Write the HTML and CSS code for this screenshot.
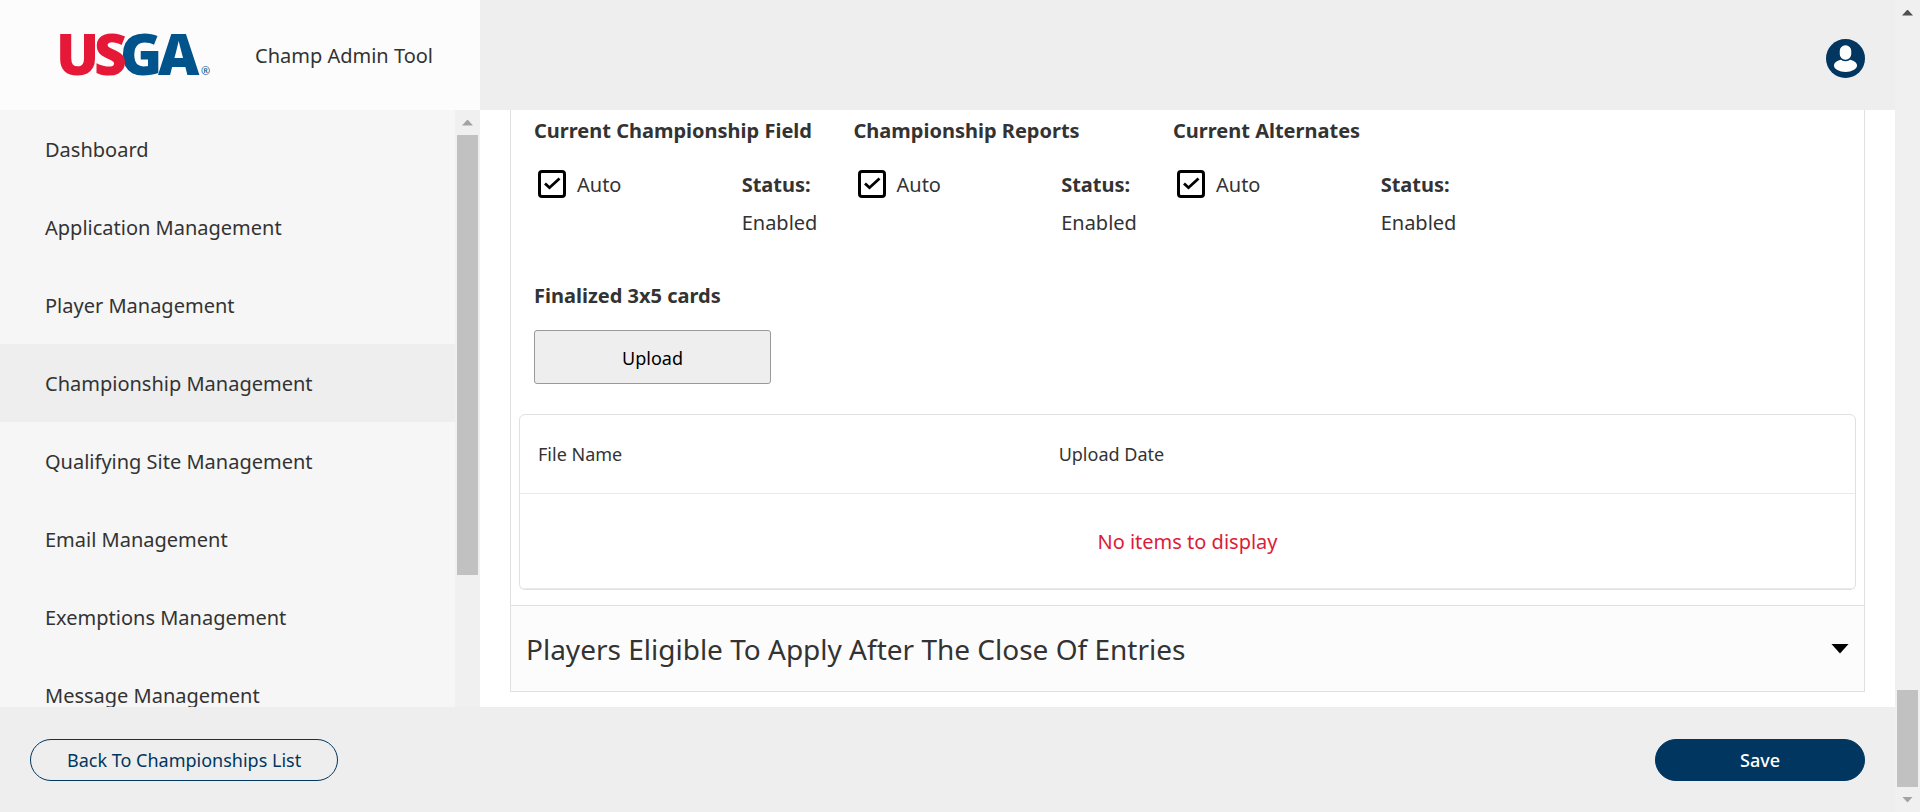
FILE: index.html
```html
<!DOCTYPE html>
<html lang="en">
<head>
<meta charset="utf-8">
<meta name="viewport" content="width=device-width, initial-scale=1">
<title>Champ Admin Tool</title>
<link rel="stylesheet" href="styles.css">
</head>
<body>
<div class="page">
  <div class="app">
    <header class="header">
      <div class="brand">
        <svg class="logo" viewBox="-6 -22 164 88" role="img" aria-label="USGA">
          <g class="logo-letters">
            <text class="logo-blue" x="60" y="42">G</text>
            <text class="logo-blue" x="98" y="42">A</text>
            <text class="logo-red" x="-4" y="42">U</text>
            <text class="logo-red" x="34" y="42">S</text>
          </g>
          <text class="logo-mark" x="141" y="42">®</text>
        </svg>
        <span class="brand-name">Champ Admin Tool</span>
      </div>
      <button class="account" type="button" aria-label="Account">
        <svg viewBox="0 0 39 39" aria-hidden="true">
          <circle cx="19.500" cy="19.500" r="19.500" fill="#00365f"/>
          <ellipse cx="19.500" cy="26.500" rx="11.500" ry="6.500" fill="#fff"/>
          <rect x="13" y="5.500" width="13" height="16" rx="6.300" fill="#fff" stroke="#00365f" stroke-width="1.500"/>
        </svg>
      </button>
    </header>

    <div class="middle">
      <aside class="sidebar">
        <nav class="nav">
          <a class="nav-link" href="#">Dashboard</a>
          <a class="nav-link" href="#">Application Management</a>
          <a class="nav-link" href="#">Player Management</a>
          <a class="nav-link nav-link-active" href="#">Championship Management</a>
          <a class="nav-link" href="#">Qualifying Site Management</a>
          <a class="nav-link" href="#">Email Management</a>
          <a class="nav-link" href="#">Exemptions Management</a>
          <a class="nav-link" href="#">Message Management</a>
        </nav>
        <div class="scrollbar" aria-hidden="true">
          <span class="scroll-arrow scroll-up"></span>
          <span class="scroll-thumb scroll-thumb-nav"></span>
        </div>
      </aside>

      <main class="main">
        <section class="panel">
          <div class="reports">
            <section>
              <h3 class="label">Current Championship Field</h3>
              <div class="report-row">
                <label class="auto"><input class="check" type="checkbox" checked>Auto</label>
                <div><strong>Status:</strong><br>Enabled</div>
              </div>
            </section>
            <section>
              <h3 class="label">Championship Reports</h3>
              <div class="report-row">
                <label class="auto"><input class="check" type="checkbox" checked>Auto</label>
                <div><strong>Status:</strong><br>Enabled</div>
              </div>
            </section>
            <section>
              <h3 class="label">Current Alternates</h3>
              <div class="report-row">
                <label class="auto"><input class="check" type="checkbox" checked>Auto</label>
                <div><strong>Status:</strong><br>Enabled</div>
              </div>
            </section>
          </div>
          <section class="cards">
            <h3 class="label">Finalized 3x5 cards</h3>
            <button class="upload" type="button">Upload</button>
          </section>
          <div class="files">
            <table class="files-table">
              <thead>
                <tr><th class="col-name" scope="col">File Name</th><th scope="col">Upload Date</th></tr>
              </thead>
              <tbody>
                <tr><td class="empty" colspan="2">No items to display</td></tr>
              </tbody>
            </table>
          </div>
        </section>
        <button class="accordion" type="button" aria-expanded="false">
          <span>Players Eligible To Apply After The Close Of Entries</span>
          <span class="caret"></span>
        </button>
      </main>
    </div>

    <footer class="footer">
      <button class="pill pill-outline" type="button">Back To Championships List</button>
      <button class="pill pill-solid" type="button">Save</button>
    </footer>
  </div>
  <div class="scrollbar" aria-hidden="true">
    <span class="scroll-arrow scroll-up scroll-up-dark"></span>
    <span class="scroll-thumb scroll-thumb-page"></span>
    <span class="scroll-arrow scroll-down"></span>
  </div>
</div>
</body>
</html>
```
FILE: styles.css
```css
* {
  box-sizing: border-box;
}

body {
  margin: 0;
  color: #333;
  background: #fff;
  font: 400 20px/38px "Noto Sans", "Open Sans", sans-serif;
}

button {
  font: inherit;
  color: inherit;
  cursor: pointer;
}

.page {
  display: flex;
  height: 100vh;
  overflow: hidden;
}

.app {
  display: flex;
  flex: 1;
  flex-direction: column;
  min-width: 0;
}

.header {
  display: flex;
  flex: none;
  align-items: center;
  justify-content: space-between;
  height: 110px;
  padding-right: 30px;
  background: #eee;
}

.brand {
  display: flex;
  align-items: center;
  gap: 37px;
  width: 480px;
  height: 100%;
  padding-left: 54px;
  background: #fcfcfc;
}

.brand-name {
  padding-top: 2px;
}

.logo {
  width: 164px;
  height: 88px;
}

.logo-letters {
  font: 800 57px "Open Sans", sans-serif;
}

.logo-red {
  fill: #e51937;
}

.logo-blue {
  fill: #00538b;
}

.logo-mark {
  fill: #00538b;
  font: 400 11px "Noto Sans", sans-serif;
}

.account {
  width: 39px;
  height: 39px;
  margin-top: 7px;
  padding: 0;
  border: 0;
  background: none;
}

.account svg {
  display: block;
}

.middle {
  display: flex;
  flex: 1;
  min-height: 0;
}

.sidebar {
  display: flex;
  flex: none;
  width: 480px;
  overflow: hidden;
  background: #f6f6f6;
}

.nav {
  flex: 1;
}

.nav-link {
  display: block;
  padding: 21px 45px 19px;
  color: inherit;
  text-decoration: none;
}

.nav-link-active {
  background: #eee;
}

.scrollbar {
  display: flex;
  flex: none;
  flex-direction: column;
  align-items: center;
  width: 25px;
  background: #f0f0f0;
}

.scroll-arrow {
  display: flex;
  flex: none;
  align-items: center;
  justify-content: center;
  height: 25px;
}

.scroll-arrow::before {
  width: 11px;
  height: 6px;
  background: #a3a3a3;
  content: "";
}

.scroll-up::before {
  clip-path: polygon(50% 0, 100% 100%, 0 100%);
}

.scroll-up-dark::before {
  background: #505050;
}

.scroll-down::before {
  clip-path: polygon(0 0, 100% 0, 50% 100%);
}

.scroll-thumb {
  width: 21px;
  background: #c1c1c1;
}

.scroll-thumb-nav {
  height: 440px;
}

.scroll-thumb-page {
  height: 97px;
  margin-top: auto;
}

.main {
  flex: 1;
  min-width: 0;
  padding: 0 30px;
  overflow: hidden;
}

.panel {
  padding: 2px 8px 15px;
  border: solid #e0e0e0;
  border-width: 0 1px;
}

.reports {
  display: grid;
  grid-template-columns: repeat(4, minmax(0, 1fr));
  padding: 0 44px 0 15px;
}

.label {
  margin: 0;
  font-size: 20px;
  font-weight: 700;
  line-height: 38px;
  white-space: nowrap;
}

.report-row {
  display: grid;
  grid-template-columns: 65% 35%;
  padding-top: 16px;
}

strong {
  font-weight: 700;
}

.auto {
  display: flex;
  align-items: center;
  align-self: start;
  gap: 11px;
  padding-left: 4px;
}

.check {
  width: 28px;
  height: 28px;
  margin: 0 0 2px;
  border: 3px solid #000;
  border-radius: 4px;
  appearance: none;
  background: url("data:image/svg+xml,%3Csvg xmlns='http://www.w3.org/2000/svg' viewBox='0 0 22 22'%3E%3Cpath d='M4 10.500l4.500 4.200 10-9.200' fill='none' stroke='%23000' stroke-width='2.800'/%3E%3C/svg%3E") center / 22px no-repeat;
}

.cards {
  padding: 35px 15px 30px;
}

.upload {
  display: block;
  width: 237px;
  height: 54px;
  margin-top: 15px;
  padding: 1px 0 0;
  border: 1px solid #999;
  border-radius: 3px;
  background: #eee;
  color: #000;
  font-size: 18px;
}

.files {
  border: 1px solid #e0e0e0;
  border-radius: 6px;
}

.files-table {
  width: 100%;
  border-spacing: 0;
}

.files-table th {
  height: 79px;
  padding: 0 18px;
  border-bottom: 1px solid #ebebeb;
  font-size: 18px;
  font-weight: 400;
  text-align: left;
}

.col-name {
  width: 39%;
}

.files-table .empty {
  height: 95px;
  padding: 1px 0 0;
  border-bottom: 1px solid #ebebeb;
  color: #dc1c38;
  text-align: center;
}

.accordion {
  display: flex;
  align-items: center;
  justify-content: space-between;
  width: 100%;
  height: 87px;
  padding: 0 15px;
  border: 1px solid #e0e0e0;
  background: #fcfcfc;
  font-size: 28px;
  text-align: left;
}

.caret {
  width: 18px;
  height: 10px;
  background: #000;
  clip-path: polygon(0 0, 100% 0, 50% 100%);
}

.footer {
  display: flex;
  flex: none;
  justify-content: space-between;
  padding: 32px 30px 31px;
  background: #eee;
}

.pill {
  height: 42px;
  padding: 0 36px;
  border: 1px solid #00365f;
  border-radius: 21px;
  font-size: 18px;
  line-height: 38px;
}

.pill-outline {
  background: none;
  color: #00365f;
}

.pill-solid {
  width: 210px;
  background: #00365f;
  color: #fff;
  font-weight: 500;
}
```
